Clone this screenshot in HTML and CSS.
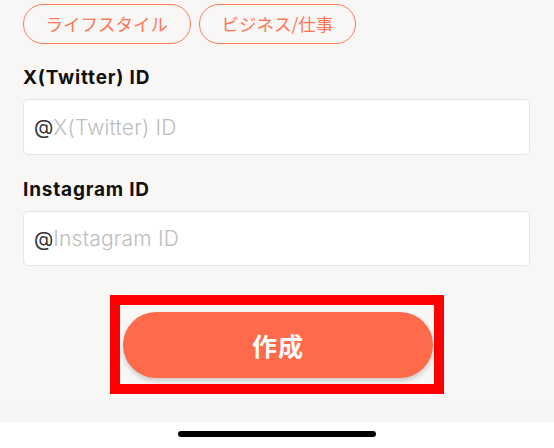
FILE: index.html
```html
<!DOCTYPE html>
<html lang="ja">
<head>
<meta charset="utf-8">
<title>作成</title>
<link rel="stylesheet" href="styles.css">
</head>
<body>
<div class="page">
  <main class="content">
    <div class="chips">
      <span class="chip">ライフスタイル</span>
      <span class="chip">ビジネス/仕事</span>
    </div>
    <label class="field-label">X(Twitter) ID</label>
    <div class="field">
      <span class="at">@</span>
      <input class="field-input" type="text" placeholder="X(Twitter) ID">
    </div>
    <label class="field-label second">Instagram ID</label>
    <div class="field short">
      <span class="at">@</span>
      <input class="field-input" type="text" placeholder="Instagram ID">
    </div>
    <div class="action">
      <div class="highlight">
        <button class="submit" type="button">作成</button>
      </div>
    </div>
  </main>
  <div class="strip"></div>
  <div class="home">
    <div class="home-bar"></div>
  </div>
</div>
</body>
</html>
```
FILE: styles.css
```css
* { box-sizing: border-box; }
html, body {
  margin: 0;
  padding: 0;
}
body {
  width: 554px;
  height: 448px;
  overflow: hidden;
  background: #ffffff;
  font-family: "Inter", "Noto Sans CJK JP", sans-serif;
}
.page {
  display: flex;
  flex-direction: column;
  height: 448px;
}
.content {
  background: #f8f7f5;
  padding: 4px 24px 0 23px;
  height: 403px;
  display: flex;
  flex-direction: column;
}
.chips {
  display: flex;
  gap: 8px;
}
.chip {
  height: 40px;
  display: flex;
  align-items: center;
  padding: 0 21.5px;
  border: 1.5px solid #ff7a5c;
  border-radius: 20px;
  color: #ff7656;
  font-family: "Noto Sans CJK JP", sans-serif;
  font-size: 17.5px;
  line-height: 1;
}
.chip + .chip {
  padding: 0 22px;
}
.field-label {
  display: block;
  margin-top: 23px;
  height: 32px;
  font-size: 19px;
  font-weight: 700;
  color: #111111;
  letter-spacing: 0.8px;
  line-height: 22px;
}
.field-label.second {
  margin-top: 24px;
}
.field {
  height: 56px;
  background: #ffffff;
  border: 1px solid #e8e6e3;
  border-radius: 5px;
  display: flex;
  align-items: center;
  padding: 0 10px 0 10px;
}
.field.short {
  height: 55px;
}
.at {
  font-size: 20px;
  color: #333333;
  font-family: "Inter", sans-serif;
}
.field-input {
  flex: 1;
  border: 0;
  outline: none;
  background: transparent;
  padding: 0;
  font-family: "Inter", sans-serif;
  font-size: 21px;
  font-weight: 300;
  letter-spacing: 0.2px;
  color: #333333;
}
.field-input::placeholder {
  color: #bdbdbd;
}
.action {
  display: flex;
  justify-content: center;
  margin-top: 29px;
}
.highlight {
  border: 10px solid #ff0000;
  padding: 7px 1px 6px 3px;
  margin-left: 1px;
}
.submit {
  width: 310px;
  height: 66px;
  border: 0;
  border-radius: 33px;
  background: #ff6a4a;
  color: #ffffff;
  font-family: "Noto Sans CJK JP", sans-serif;
  font-size: 25px;
  font-weight: 700;
  letter-spacing: 1px;
  box-shadow: 0 3px 5px rgba(0, 0, 0, 0.18);
  display: block;
}
.strip {
  height: 19px;
  background: #f6f6f9;
}
.home {
  flex: 1;
  background: #ffffff;
  display: flex;
  justify-content: center;
  padding-top: 9px;
}
.home-bar {
  width: 198px;
  height: 6px;
  border-radius: 3px;
  background: #000000;
}
```
